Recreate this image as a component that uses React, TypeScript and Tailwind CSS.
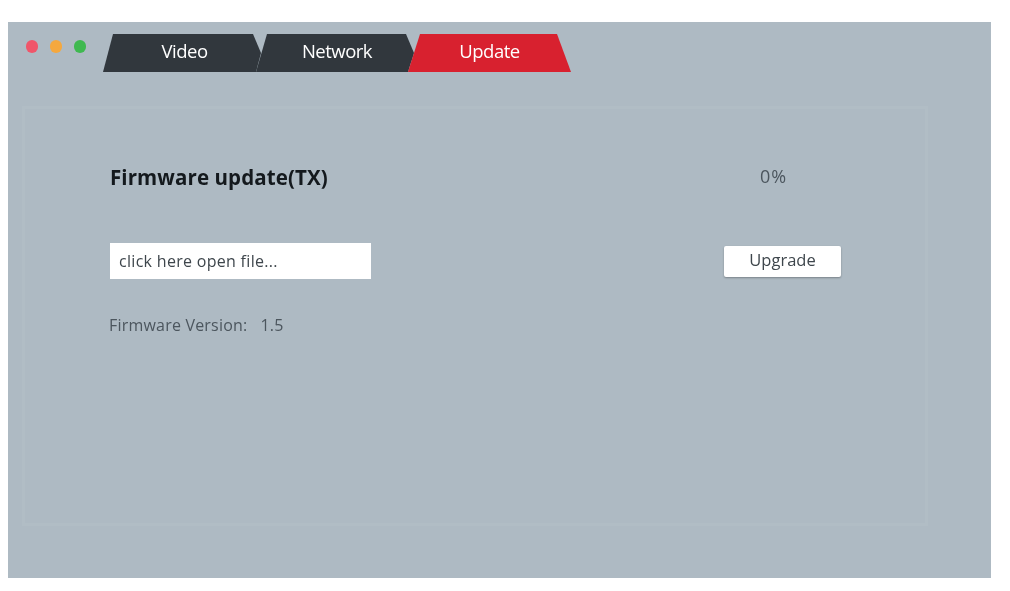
const fontFamily = "font-['Open_Sans','Liberation_Sans',sans-serif]";

function Tab({ label, className }: { label: string; className: string }) {
  return (
    <div className={`h-[38px] pb-[4px] flex items-center justify-center text-white text-[18.5px] font-medium tracking-[-0.5px] ${className}`}>
      {label}
    </div>
  );
}

export default function App() {
  return (
    <div className={`w-[1010px] h-[591px] bg-white pt-[22px] pl-[8px] overflow-hidden ${fontFamily}`}>
      <div className="w-[983px] h-[556px] bg-[#aebac3] pt-[12px] pl-[14px] blur-[0.6px]">
        {/* Title bar: window dots and tabs */}
        <div className="flex items-start h-[38px]">
          <div className="flex gap-[12px] mt-[6px] ml-[4px] mr-[17px]">
            <span className="w-[12px] h-[13px] rounded-full bg-[#f0566a]" />
            <span className="w-[12px] h-[13px] rounded-full bg-[#f5a83e]" />
            <span className="w-[12px] h-[13px] rounded-full bg-[#3fb950]" />
          </div>
          <Tab
            label="Video"
            className="w-[159px] pl-[4px] bg-[#31373d] [clip-path:polygon(0_100%,10px_0,150px_0,158px_50%,153px_100%)]"
          />
          <Tab
            label="Network"
            className="w-[158px] -ml-[6px] pl-[4px] bg-[#31373d] [clip-path:polygon(0_100%,11px_0,150px_0,158px_50%,152px_100%)]"
          />
          <Tab
            label="Update"
            className="w-[163px] -ml-[6px] bg-[#d8212f] [clip-path:polygon(0_100%,12px_0,149px_0,163px_100%)]"
          />
        </div>

        {/* Firmware panel */}
        <div className="mt-[34px] w-[906px] h-[420px] border-[3px] border-[#b1bdc5] pl-[85px] pr-[84px] pt-[53px] text-[#4c565e]">
          <div className="grid grid-cols-[614px_117px]">
            <h1 className="h-[30px] leading-[30px] text-[20.5px] font-bold text-[#14191d] tracking-[0.1px]">
              Firmware update(TX)
            </h1>
            <span className="h-[30px] leading-[28px] text-[18px] ml-[36px] tracking-[1px]">0%</span>

            <div className="mt-[51px] w-[261px] h-[36px] bg-white flex items-center pl-[9px] pb-[1px] text-[16px] tracking-[0.3px] text-[#3e464c]">
              click here open file...
            </div>
            <button className="mt-[54px] w-[117px] h-[31px] pb-[3px] bg-white rounded-[2px] shadow-[0_1px_2px_rgba(0,0,0,0.3)] text-[16.5px] text-[#3e464c]">
              Upgrade
            </button>
          </div>
          <div className="mt-[34px] -ml-[1px] flex gap-[13px] text-[16px] leading-[24px] tracking-[0.2px]">
            <span>Firmware Version:</span>
            <span>1.5</span>
          </div>
        </div>
      </div>
    </div>
  );
}
